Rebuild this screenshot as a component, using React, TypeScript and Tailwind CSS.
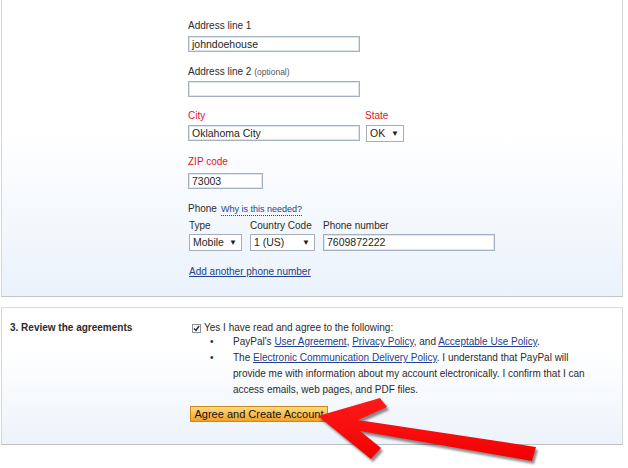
import * as React from "react";

const labelCls = "text-[10px] leading-[12px] text-[#2b2b2b]";
const redLabelCls = "text-[10px] leading-[12px] text-[#e3112b]";
const inputCls =
  "h-[16px] border border-[#a3b0c2] shadow-[inset_0_0_0_1px_#dfe5ee] bg-white px-[3px] text-[10.5px] leading-[14px] text-[#1e1e1e]";
const linkCls = "text-[#23408e] underline";

const FakeSelect: React.FC<{ value: string; className: string }> = ({ value, className }) => {
  return (
    <div
      className={`flex h-[17px] items-center justify-between border border-[#a7adb6] bg-white pl-[3px] pr-[4px] text-[10.5px] text-[#1e1e1e] ${className}`}
    >
      <span>{value}</span>
      <span className="text-[8px] leading-none">▼</span>
    </div>
  );
};

const Arrow: React.FC = () => {
  return (
    <svg
      className="pointer-events-none absolute left-0 top-0 drop-shadow-[2px_3px_1px_rgba(0,0,0,0.45)]"
      width="628"
      height="468"
      viewBox="0 0 628 468"
    >
      <defs>
        <linearGradient id="arrowRed" x1="0" y1="0" x2="0" y2="1">
          <stop offset="0" stopColor="#ff1a1a" />
          <stop offset="1" stopColor="#f20000" />
        </linearGradient>
      </defs>
      <polygon
        points="318,416 380,398 387,407 358,420 536,447 532,461 360,431 381,448 371,459"
        fill="url(#arrowRed)"
      />
    </svg>
  );
};

export default function App() {
  return (
    <div className="relative h-[468px] w-[628px] overflow-hidden bg-white font-['Liberation_Sans',Arial,sans-serif]">
      {/* contact / address panel */}
      <div className="ml-[1px] h-[297px] w-[622px] border-x border-b border-x-[#d6d6d6] border-b-[#c4c4c4] bg-gradient-to-b from-white from-45% to-[#eaf2fb] pl-[186px] pt-[20px]">
        <div className={labelCls}>Address line 1</div>
        <div className={`${inputCls} mt-[4px] w-[172px]`}>johndoehouse</div>

        <div className={`${labelCls} mt-[14px]`}>
          Address line 2 <span className="text-[8.5px] text-[#555]">(optional)</span>
        </div>
        <div className={`${inputCls} mt-[3px] w-[172px]`}></div>

        <div className="mt-[13px] flex gap-[6px]">
          <div>
            <div className={redLabelCls}>City</div>
            <div className={`${inputCls} mt-[3px] w-[172px]`}>Oklahoma City</div>
          </div>
          <div>
            <div className={`${redLabelCls} ml-[-1px]`}>State</div>
            <FakeSelect value="OK" className="mt-[3px] w-[38px]" />
          </div>
        </div>

        <div className={`${redLabelCls} mt-[14px]`}>ZIP code</div>
        <div className={`${inputCls} mt-[5px] w-[75px]`}>73003</div>

        <div className={`${labelCls} mt-[14px] flex items-baseline gap-[4px]`}>
          <span>Phone</span>
          <span className="border-b border-dotted border-[#23408e] text-[9px] leading-[11px] text-[#23408e]">
            Why is this needed?
          </span>
        </div>

        <div className="mt-[4px] flex">
          <div className="ml-[1px] w-[61px]">
            <div className={labelCls}>Type</div>
            <FakeSelect value="Mobile" className="mt-[2px] w-[53px]" />
          </div>
          <div className="w-[73px]">
            <div className={labelCls}>Country Code</div>
            <FakeSelect value="1 (US)" className="mt-[2px] w-[65px]" />
          </div>
          <div>
            <div className={labelCls}>Phone number</div>
            <div className={`${inputCls} mt-[2px] h-[17px] w-[172px]`}>7609872222</div>
          </div>
        </div>

        <div className={`${labelCls} mt-[15px] ml-[1px]`}>
          <span className={linkCls}>Add another phone number</span>
        </div>
      </div>

      {/* agreements panel */}
      <div className="ml-[1px] mt-[10px] flex h-[138px] w-[622px] border border-x-[#d6d6d6] border-t-[#d9d9d9] border-b-[#bdbdbd] bg-gradient-to-b from-white from-30% to-[#edf3fb] pt-[14px] text-[10px] text-[#2b2b2b]">
        <div className="w-[190px] pl-[8px] font-bold leading-[12px]">3. Review the agreements</div>
        <div>
          <div className="flex items-center gap-[3px] leading-[12px]">
            <div className="flex h-[9px] w-[9px] items-center justify-center border border-[#8a8f96] bg-white">
              <svg width="7" height="7" viewBox="0 0 7 7">
                <path d="M1 3.5 L3 5.5 L6 1" fill="none" stroke="#222" strokeWidth="1.4" />
              </svg>
            </div>
            <span>Yes I have read and agree to the following:</span>
          </div>
          <ul className="pl-[18px] leading-[16px]">
            <li className="flex">
              <span className="w-[23px]">•</span>
              <p>
                PayPal's <a className={linkCls}>User Agreement</a>, <a className={linkCls}>Privacy Policy</a>,
                and <a className={linkCls}>Acceptable Use Policy</a>.
              </p>
            </li>
            <li className="flex">
              <span className="w-[23px] shrink-0">•</span>
              <p className="w-[370px]">
                The <a className={linkCls}>Electronic Communication Delivery Policy</a>. I understand that
                PayPal will provide me with information about my account electronically. I confirm that I
                can access emails, web pages, and PDF files.
              </p>
            </li>
          </ul>
          <button className="ml-[-2px] mt-[8px] flex h-[16px] w-[138px] items-center justify-center border border-[#c98a1c] bg-gradient-to-b from-[#ffdb7c] to-[#f3a21f] text-[11px] leading-none text-[#111]">
            Agree and Create Account
          </button>
        </div>
      </div>

      <Arrow />
    </div>
  );
}
